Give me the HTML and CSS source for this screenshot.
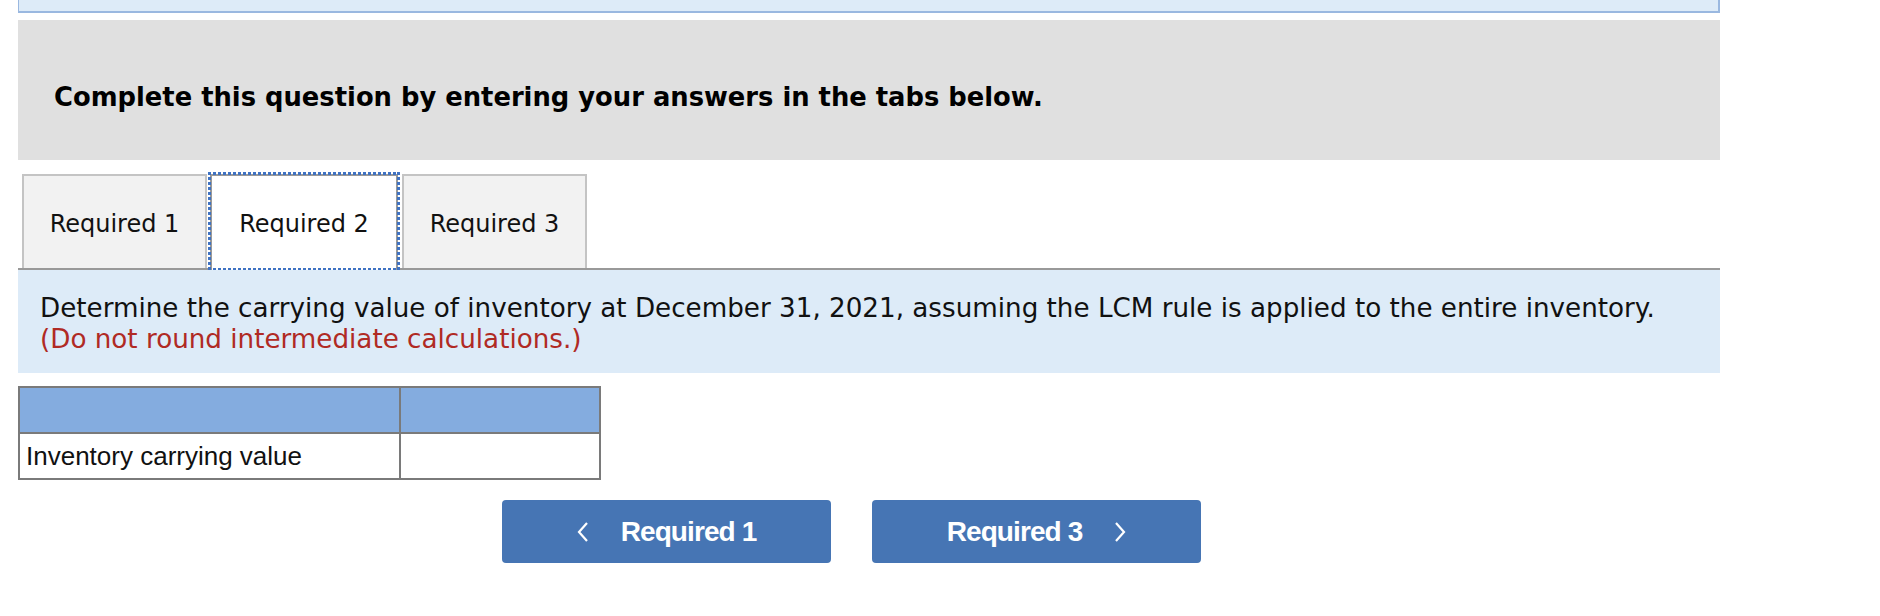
FILE: index.html
```html
<!DOCTYPE html>
<html>
<head>
<meta charset="utf-8">
<link rel="stylesheet" href="styles.css">
</head>
<body>
<div class="page">
  <div class="topbox"></div>
  <div class="banner">
    <h2 class="banner-title">Complete this question by entering your answers in the tabs below.</h2>
  </div>
  <div class="tabs">
    <div class="tab">Required 1</div>
    <div class="tab tab-active">Required 2</div>
    <div class="tab tab-last">Required 3</div>
  </div>
  <div class="instructions">
    <div class="instr-main">Determine the carrying value of inventory at December 31, 2021, assuming the LCM rule is applied to the entire inventory.</div>
    <div class="instr-note">(Do not round intermediate calculations.)</div>
  </div>
  <table class="answer">
    <tr class="answer-head"><th class="col-label"></th><th class="col-value"></th></tr>
    <tr><td class="col-label">Inventory carrying value</td><td class="col-value"></td></tr>
  </table>
  <div class="nav">
    <button class="nav-btn"><svg class="chev" viewBox="0 0 12 20" width="12" height="20"><polyline points="10,1 2,10 10,19" fill="none" stroke="#fff" stroke-width="2.2"/></svg><span>Required 1</span></button>
    <button class="nav-btn"><span>Required 3</span><svg class="chev" viewBox="0 0 12 20" width="12" height="20"><polyline points="2,1 10,10 2,19" fill="none" stroke="#fff" stroke-width="2.2"/></svg></button>
  </div>
</div>
</body>
</html>
```
FILE: styles.css
```css
html, body {
  margin: 0;
  padding: 0;
  background: #ffffff;
}
.page {
  margin-left: 18px;
  width: 1702px;
  display: flex;
  flex-direction: column;
}
.topbox {
  height: 11px;
  background: #ddebf8;
  border: 2px solid #9ab8e0;
  border-top: none;
  border-left-width: 1px;
}
.banner {
  margin-top: 7px;
  height: 140px;
  background: #e0e0e0;
  display: flex;
  align-items: center;
  padding-left: 36px;
  box-sizing: border-box;
}
.banner-title {
  margin: 0;
  padding-top: 14px;
  font-family: "DejaVu Sans", Verdana, sans-serif;
  font-weight: bold;
  font-size: 25.8px;
  color: #000;
  letter-spacing: 0;
}
.tabs {
  margin-top: 14px;
  display: flex;
  gap: 3px;
  padding-left: 4px;
  border-bottom: 2px solid #999999;
  height: 94px;
  align-items: stretch;
}
.tab {
  width: 185px;
  box-sizing: border-box;
  background: #f2f2f2;
  border: 2px solid #c4c4c4;
  border-bottom: none;
  display: flex;
  align-items: center;
  justify-content: center;
  font-family: "DejaVu Sans", Verdana, sans-serif;
  font-size: 24px;
  color: #111;
  padding-top: 4px;
}
.tab-active {
  position: relative;
  width: 188px;
  background: #ffffff;
  border-color: #999999;
  margin-bottom: -2px;
  padding-top: 2px;
}
.tab-active::after {
  content: "";
  position: absolute;
  top: -4px;
  bottom: 0;
  left: -4px;
  right: -4px;
  pointer-events: none;
  background:
    repeating-linear-gradient(90deg, #3f72c2 0 3px, transparent 3px 5px) top left / 100% 3px no-repeat,
    repeating-linear-gradient(90deg, #3f72c2 0 3px, transparent 3px 5px) bottom left / 100% 2px no-repeat,
    repeating-linear-gradient(180deg, #3f72c2 0 3px, transparent 3px 5px) top left / 3px 100% no-repeat,
    repeating-linear-gradient(180deg, #3f72c2 0 3px, transparent 3px 5px) top right / 3px 100% no-repeat;
}
.tab-last {
  margin-left: 1px;
}
.instructions {
  background: #ddebf8;
  height: 103px;
  box-sizing: border-box;
  padding: 23px 0 0 22px;
  font-family: "DejaVu Sans", Verdana, sans-serif;
  font-size: 26.2px;
  line-height: 31px;
}
.instr-main {
  color: #111;
}
.instr-note {
  color: #b02a24;
}
.answer {
  margin-top: 13px;
  border-collapse: collapse;
  width: 583px;
  font-family: "Liberation Sans", Arial, sans-serif;
  font-size: 26px;
}
.answer th, .answer td {
  border: 2px solid #7a7a7a;
  padding: 0 0 0 6px;
  text-align: left;
  font-weight: normal;
  color: #111;
}
.answer-head th {
  background: #84acdf;
  height: 46px;
  box-sizing: border-box;
}
.answer td {
  height: 44px;
}
.col-label {
  width: 373px;
}
.nav {
  margin-top: 20px;
  display: flex;
  gap: 41px;
  padding-left: 484px;
}
.nav-btn {
  width: 329px;
  height: 63px;
  border: none;
  border-radius: 4px;
  background: #4675b4;
  color: #ffffff;
  font-family: "Liberation Sans", Arial, sans-serif;
  font-weight: bold;
  font-size: 28px;
  letter-spacing: -0.9px;
  display: flex;
  align-items: center;
  justify-content: center;
  gap: 32px;
  padding: 0;
}
.chev {
  display: block;
}
```
